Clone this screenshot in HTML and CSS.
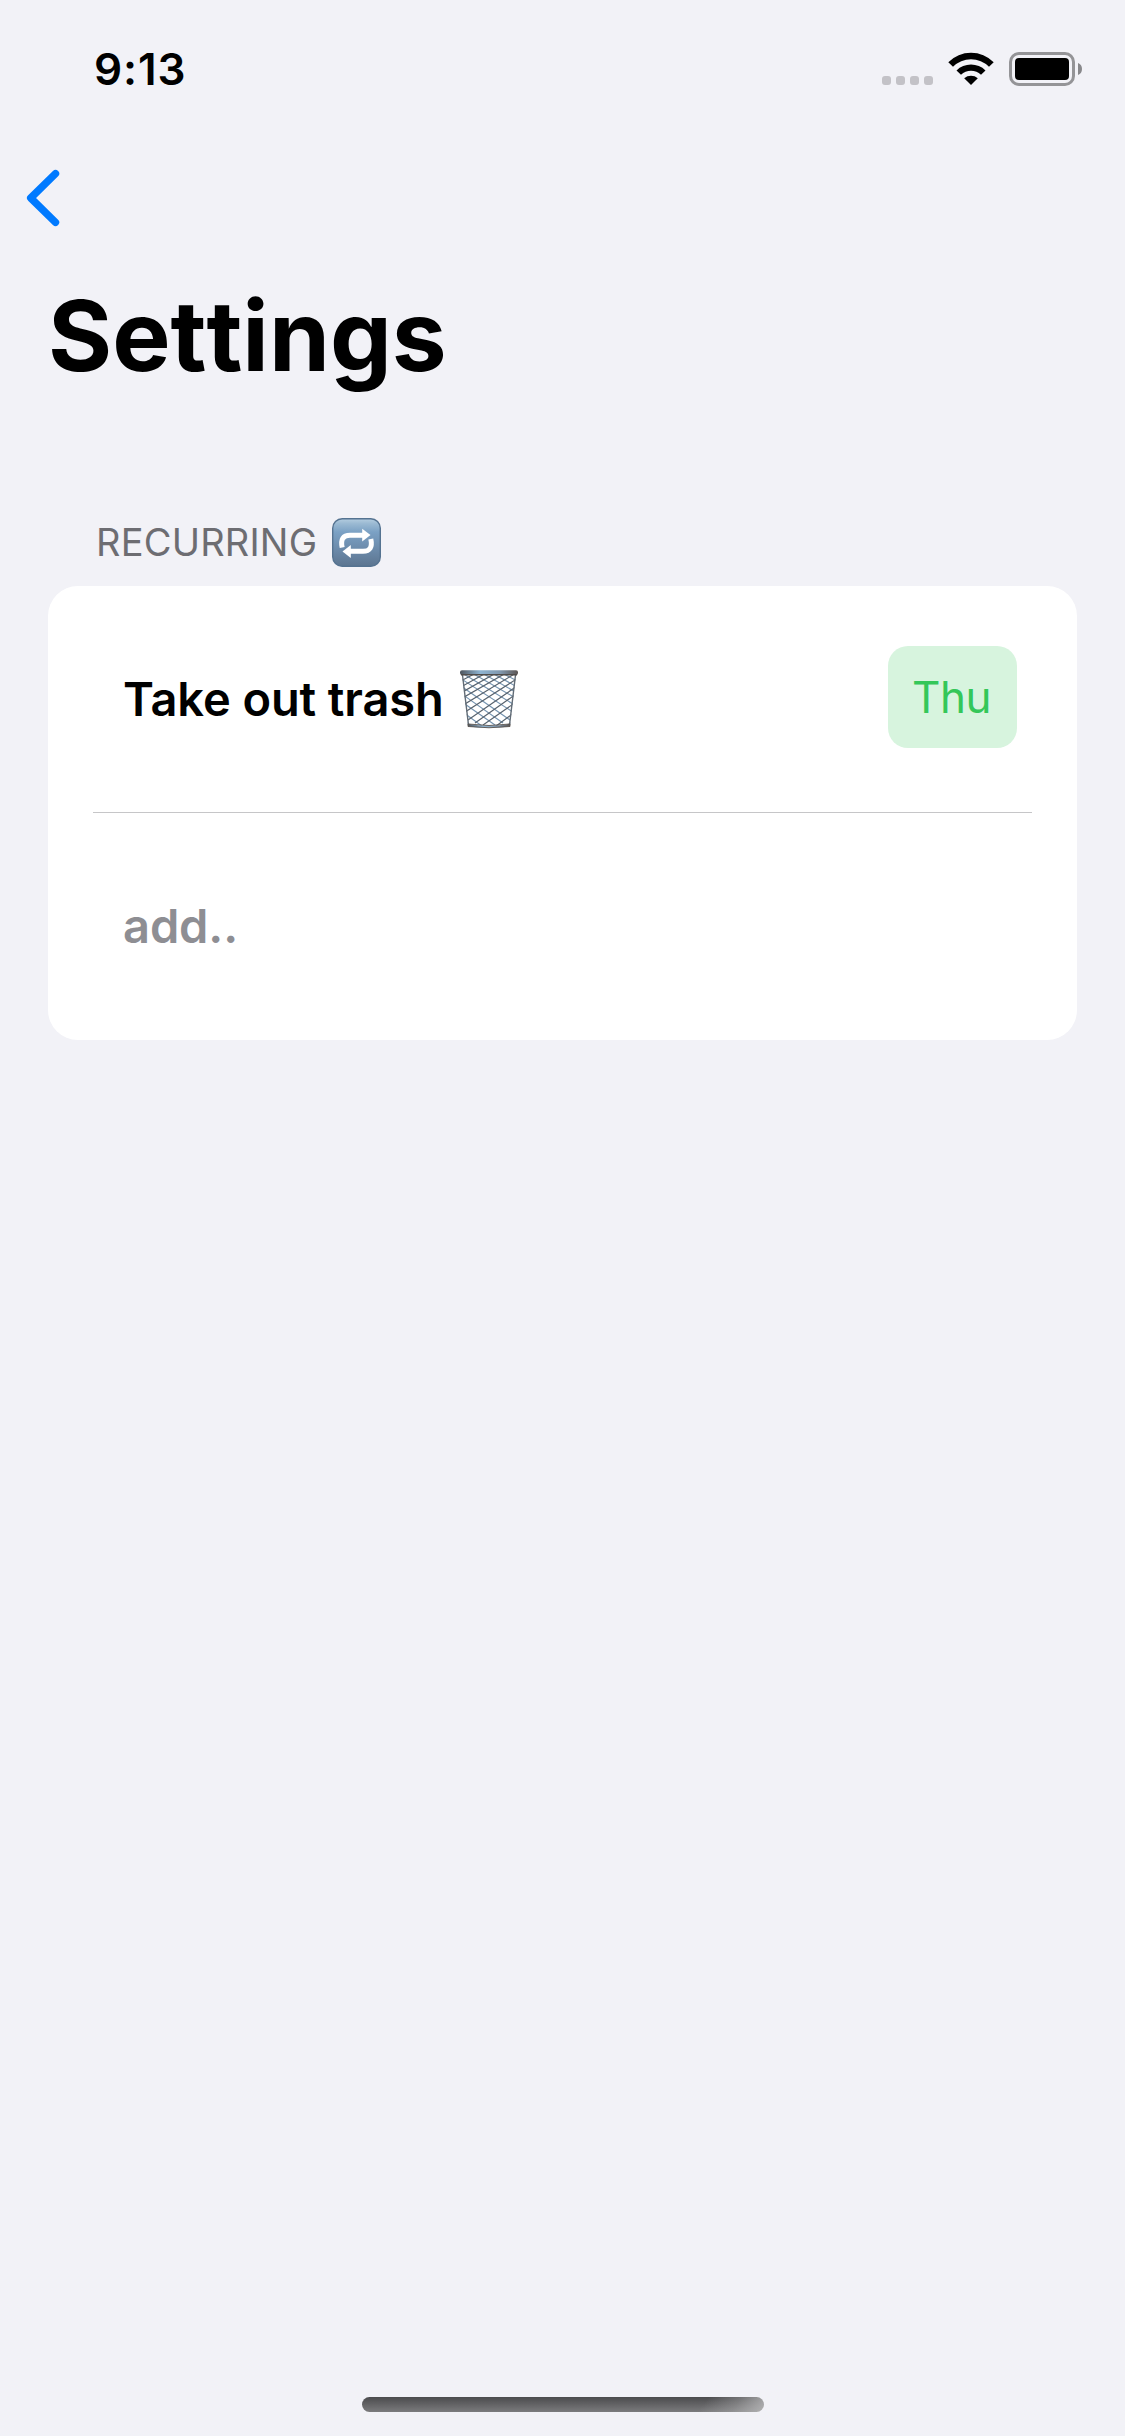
FILE: index.html
```html
<!DOCTYPE html>
<html lang="en">
<head>
<meta charset="utf-8">
<title>Settings</title>
<link rel="stylesheet" href="styles.css">
</head>
<body>
<div class="screen">
  <header class="status">
    <span class="time">9:13</span>
    <div class="indicators">
      <div class="signal"><i></i><i></i><i></i><i></i></div>
      <svg class="wifi" width="46" height="34" viewBox="0 0 46 34">
        <path d="M0.3 10.2 A32 32 0 0 1 45.7 10.2 L41 14.7 A25.6 25.6 0 0 0 5 14.7 Z"/>
        <path d="M8.5 18.4 A20.8 20.8 0 0 1 37.5 18.4 L33 22.8 A14.3 14.3 0 0 0 13 22.8 Z"/>
        <path d="M16.2 26.2 A10.6 10.6 0 0 1 29.8 26.2 L23 33 Z"/>
      </svg>
      <svg class="battery" width="73" height="34" viewBox="0 0 73 34">
        <rect x="1.5" y="1.5" width="63" height="31" rx="8.5" fill="none" stroke="#949497" stroke-width="3"/>
        <rect x="6" y="6" width="54" height="22" rx="4"/>
        <path d="M69 11 Q73 12.5 73 17 Q73 21.500 69 23 Z" fill="#88888b"/>
      </svg>
    </div>
  </header>
  <nav class="nav">
    <svg width="34" height="58" viewBox="0 0 34 58"><path d="M29.500 4.700 L4.700 29 L29.500 53.300" fill="none" stroke="#007aff" stroke-width="7.400" stroke-linecap="round" stroke-linejoin="round"/></svg>
  </nav>
  <h1 class="title">Settings</h1>
  <h2 class="section">
    <span>RECURRING</span>
    <svg width="49" height="49" viewBox="0 0 49 49">
      <defs><linearGradient id="tile" x1="0" y1="0" x2="0" y2="1"><stop offset="0" stop-color="#b5cee0"/><stop offset=".1" stop-color="#9bbad3"/><stop offset=".28" stop-color="#7ba1c4"/><stop offset=".7" stop-color="#6987a6"/><stop offset="1" stop-color="#5c7590"/></linearGradient></defs>
      <rect x=".7" y=".7" width="47.600" height="47.600" rx="9.500" fill="url(#tile)" stroke="#557391" stroke-width="1.400"/>
      <path d="M10.200 29.500 Q7.500 17.300 18 17.300 H31.500" fill="none" stroke="#fff" stroke-width="5"/>
      <path d="M30.200 10.800 L38.500 17 L30.200 23.500 Z" fill="#fff"/>
      <path d="M38.800 21 Q41.500 33.300 31 33.300 H17.500" fill="none" stroke="#fff" stroke-width="5"/>
      <path d="M18.800 27 L10.500 33.500 L18.800 40 Z" fill="#fff"/>
    </svg>
  </h2>
  <section class="card">
    <div class="row">
      <span class="label">Take out trash</span>
      <svg class="trash" width="60" height="60" viewBox="0 0 60 60">
        <defs>
          <clipPath id="basket"><path d="M3 5 H57 L51 57 H9 Z"/></clipPath>
          <linearGradient id="rim"><stop offset="0" stop-color="#4d545c"/><stop offset=".35" stop-color="#8eb4d2"/><stop offset=".7" stop-color="#8097ad"/><stop offset="1" stop-color="#5b5553"/></linearGradient>
        </defs>
        <g clip-path="url(#basket)" fill="none" stroke-width="1.200">
          <path stroke="#7695b1" d="M-36 6L36 56M-27 4L44 54M-17 4L51 51M-7 4L57 45M3 4L59 38M13 4L60 31M23 4L60 25M33 4L60 19M43 4L60 13M-44 8L27 60M-53 10L18 61"/>
          <path stroke="#59646f" d="M96 6L24 56M87 4L16 54M77 4L9 51M67 4L3 45M57 4L1 38M47 4L0 31M37 4L0 25M27 4L0 19M17 4L0 13M104 8L33 60M113 10L42 61"/>
        </g>
        <path d="M3.500 6 L9.500 56 M56.500 6 L50.500 56" stroke="#626c76" stroke-width="1.400"/>
        <path d="M9 55 Q30 58 51 55 V57.500 Q30 60 9 57.500 Z" fill="url(#rim)" stroke="#59544f" stroke-width=".9"/>
        <rect x="1" y="1.300" width="58" height="4.700" rx="2" fill="url(#rim)"/>
        <path d="M2 5.800 H58" stroke="#514d4b" stroke-width="1.500"/>
      </svg>
      <span class="badge">Thu</span>
    </div>
    <hr class="divider">
    <div class="row"><span class="label muted">add..</span></div>
  </section>
  <footer class="home"><div class="home-bar"></div></footer>
</div>
</body>
</html>
```
FILE: styles.css
```css
* { box-sizing: border-box; }
body { margin: 0; }
.screen {
  width: 1125px;
  height: 2436px;
  display: flex;
  flex-direction: column;
  background: #f2f2f7;
  color: #000;
  font-family: Inter, "Liberation Sans", sans-serif;
}
svg { display: block; flex: none; }
.status {
  height: 138px;
  padding: 0 43px 0 94px;
  display: flex;
  justify-content: space-between;
  align-items: center;
}
.time { font-size: 44px; font-weight: 600; letter-spacing: 0.9px; }
.indicators { display: flex; align-items: flex-end; height: 34px; }
.signal { display: flex; gap: 5px; margin: 0 15px 1px 0; }
.signal i { width: 9px; height: 9px; border-radius: 3px; background: #c3c2c7; }
.wifi { margin-right: 15px; }
.nav { height: 119px; padding: 31px 0 0 26px; }
.title {
  margin: 0;
  padding-left: 48px;
  height: 158px;
  line-height: 158px;
  font-size: 98px;
  font-weight: 700;
  font-kerning: none;
  font-variant-ligatures: none;
}
.section {
  margin: 0;
  padding-left: 96px;
  height: 171px;
  padding-top: 84px;
  display: flex;
  align-items: center;
  gap: 15px;
  font-size: 38px;
  font-weight: 400;
  letter-spacing: 0.2px;
  color: #6d6d72;
}
.section span { margin-top: -1px; }
.card {
  margin: 0 48px;
  height: 454px;
  border-radius: 30px;
  background: #fff;
}
.row {
  height: 226px;
  padding: 0 60px 0 75px;
  display: flex;
  align-items: center;
}
.label {
  margin-top: -2px;
  font-size: 47px;
  font-weight: 600;
  letter-spacing: -0.1px;
  white-space: nowrap;
}
.muted { color: #8e8e93; }
.trash { margin-left: 15px; }
.badge {
  width: 129px;
  height: 102px;
  margin: 0 0 4px auto;
  padding-right: 2px;
  border-radius: 20px;
  background: #d7f4de;
  color: #34c759;
  font-size: 44px;
  letter-spacing: -0.4px;
  line-height: 102px;
  text-align: center;
}
.divider {
  height: 1px;
  margin: 0 45px;
  border: 0;
  background: #c6c6c8;
}
.home {
  margin-top: auto;
  padding-bottom: 24px;
  display: flex;
  justify-content: center;
}
.home-bar {
  width: 402px;
  height: 15px;
  border-radius: 8px;
  background:
    linear-gradient(125deg, transparent 84%, rgba(175, 175, 176, 0.4) 92%, rgba(175, 175, 176, 0.95) 99%),
    linear-gradient(#4b4b4d, #7b7b7d);
}
```
